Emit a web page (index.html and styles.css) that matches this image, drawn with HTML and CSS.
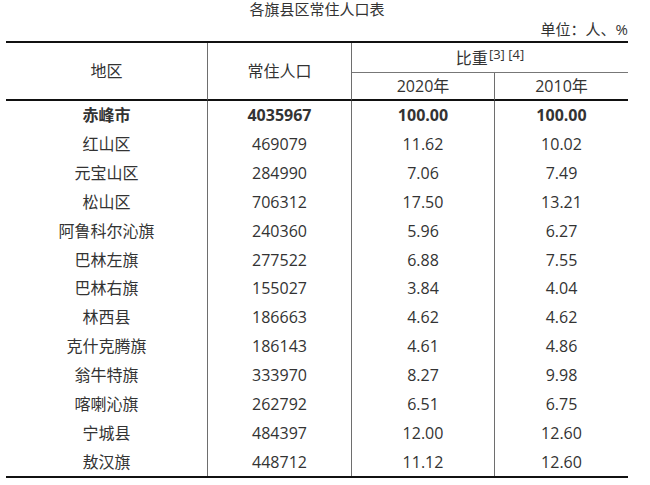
FILE: index.html
```html
<!DOCTYPE html>
<html lang="zh-CN">
<head>
<meta charset="utf-8">
<title>各旗县区常住人口表</title>
<link rel="stylesheet" href="styles.css">
</head>
<body>
<div class="page">
  <div class="title">各旗县区常住人口表</div>
  <div class="unit">单位：人、%</div>
  <table class="pop">
    <colgroup>
      <col class="c1"><col class="c2"><col class="c3"><col class="c4">
    </colgroup>
    <thead>
      <tr class="h1">
        <th rowspan="2" class="vr hb">地区</th>
        <th rowspan="2" class="vr hb">常住人口</th>
        <th colspan="2" class="sb">比重<sup>[3] [4]</sup></th>
      </tr>
      <tr class="h2">
        <th class="vr hb">2020年</th>
        <th class="hb">2010年</th>
      </tr>
    </thead>
    <tbody>
      <tr class="total"><td>赤峰市</td><td>4035967</td><td>100.00</td><td>100.00</td></tr>
      <tr><td>红山区</td><td>469079</td><td>11.62</td><td>10.02</td></tr>
      <tr><td>元宝山区</td><td>284990</td><td>7.06</td><td>7.49</td></tr>
      <tr><td>松山区</td><td>706312</td><td>17.50</td><td>13.21</td></tr>
      <tr><td>阿鲁科尔沁旗</td><td>240360</td><td>5.96</td><td>6.27</td></tr>
      <tr><td>巴林左旗</td><td>277522</td><td>6.88</td><td>7.55</td></tr>
      <tr><td>巴林右旗</td><td>155027</td><td>3.84</td><td>4.04</td></tr>
      <tr><td>林西县</td><td>186663</td><td>4.62</td><td>4.62</td></tr>
      <tr><td>克什克腾旗</td><td>186143</td><td>4.61</td><td>4.86</td></tr>
      <tr><td>翁牛特旗</td><td>333970</td><td>8.27</td><td>9.98</td></tr>
      <tr><td>喀喇沁旗</td><td>262792</td><td>6.51</td><td>6.75</td></tr>
      <tr><td>宁城县</td><td>484397</td><td>12.00</td><td>12.60</td></tr>
      <tr><td>敖汉旗</td><td>448712</td><td>11.12</td><td>12.60</td></tr>
    </tbody>
  </table>
</div>
</body>
</html>
```
FILE: styles.css
```css
html, body {
  margin: 0;
  padding: 0;
  background: #ffffff;
}

body {
  font-family: "Open Sans", "Noto Sans CJK SC", sans-serif;
  color: #333333;
}

.page {
  width: 622px;
  padding-left: 6px;
}

.title {
  font-size: 15px;
  line-height: 18px;
  text-align: center;
  color: #333333;
}

.unit {
  font-size: 15px;
  line-height: 23px;
  text-align: right;
  color: #333333;
}

.pop {
  width: 622px;
  table-layout: fixed;
  border-collapse: separate;
  border-spacing: 0;
  border-top: 2px solid #111111;
  border-bottom: 2px solid #111111;
  font-size: 16px;
}

.c1 { width: 202px; }
.c2 { width: 144px; }
.c3 { width: 143px; }
.c4 { width: 133px; }

.pop th,
.pop td {
  padding: 0;
  text-align: center;
  vertical-align: middle;
  font-weight: normal;
  line-height: 20px;
  white-space: nowrap;
}

.pop th {
  color: #333333;
}

.h1 { height: 30px; }
.h2 { height: 28px; }

.vr { border-right: 1px solid #6e6e6e; }
.hb { border-bottom: 2px solid #111111; }
.sb { border-bottom: 1px solid #777777; }

.pop sup {
  font-size: 13px;
  line-height: 0;
  vertical-align: 5px;
  margin-left: 1px;
}

.pop tbody tr { height: 28.846px; }

.pop tbody td:nth-child(-n+3) {
  border-right: 1px solid #6e6e6e;
}

.pop tbody td {
  color: #333333;
}

.total td {
  font-weight: bold;
  color: #111111;
}
```
